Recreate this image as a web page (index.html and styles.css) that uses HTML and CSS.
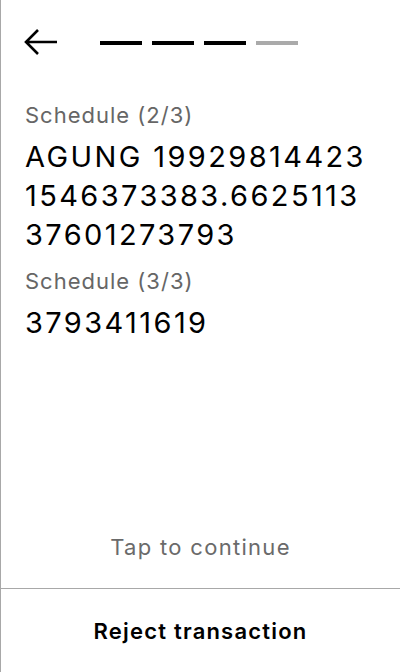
FILE: index.html
```html
<!DOCTYPE html>
<html>
<head>
<meta charset="utf-8">
<link rel="stylesheet" href="styles.css">
</head>
<body>
<div class="screen">
  <div class="header">
    <svg class="back" width="36" height="30" viewBox="0 0 36 30">
      <path d="M34 14H3M15 2L3 14L15 26" fill="none" stroke="#000" stroke-width="2.6"/>
    </svg>
    <div class="steps">
      <span class="step on"></span>
      <span class="step on"></span>
      <span class="step on"></span>
      <span class="step"></span>
    </div>
  </div>
  <div class="content">
    <div class="label">Schedule (2/3)</div>
    <div class="value">AGUNG 19929814423 1546373383.6625113 37601273793</div>
    <div class="label">Schedule (3/3)</div>
    <div class="value">3793411619</div>
  </div>
  <div class="tap">Tap to continue</div>
  <div class="reject">Reject transaction</div>
</div>
</body>
</html>
```
FILE: styles.css
```css
html, body { margin: 0; padding: 0; background: #fff; }
.screen {
  width: 400px; height: 672px; box-sizing: border-box;
  border-left: 1px solid #a8a8a8;
  display: flex; flex-direction: column;
  font-family: Inter, "Noto Sans", sans-serif;
  color: #000;
}
.header { display: flex; align-items: center; height: 86px; padding-left: 22px; }
.back { display: block; }
.steps { display: flex; gap: 10px; margin-left: 41px; margin-top: -1px; }
.step { width: 42px; height: 4px; background: #aaa; }
.step.on { background: #000; }
.content { flex: 1; padding: 15px 16px 0 24px; }
.label { font-size: 22px; line-height: 28px; letter-spacing: 1px; color: #666; margin-bottom: 8px; }
.value { font-size: 29px; line-height: 39px; letter-spacing: 2.4px; margin-bottom: 13px; }
.tap { text-align: center; font-size: 22px; line-height: 28px; letter-spacing: 1.3px; color: #6a6a6a; padding-bottom: 27px; }
.reject { border-top: 1px solid #a8a8a8; height: 83px; display: flex; align-items: center; justify-content: center; font-size: 22px; line-height: 28px; letter-spacing: 1.2px; font-weight: 600; }
```
